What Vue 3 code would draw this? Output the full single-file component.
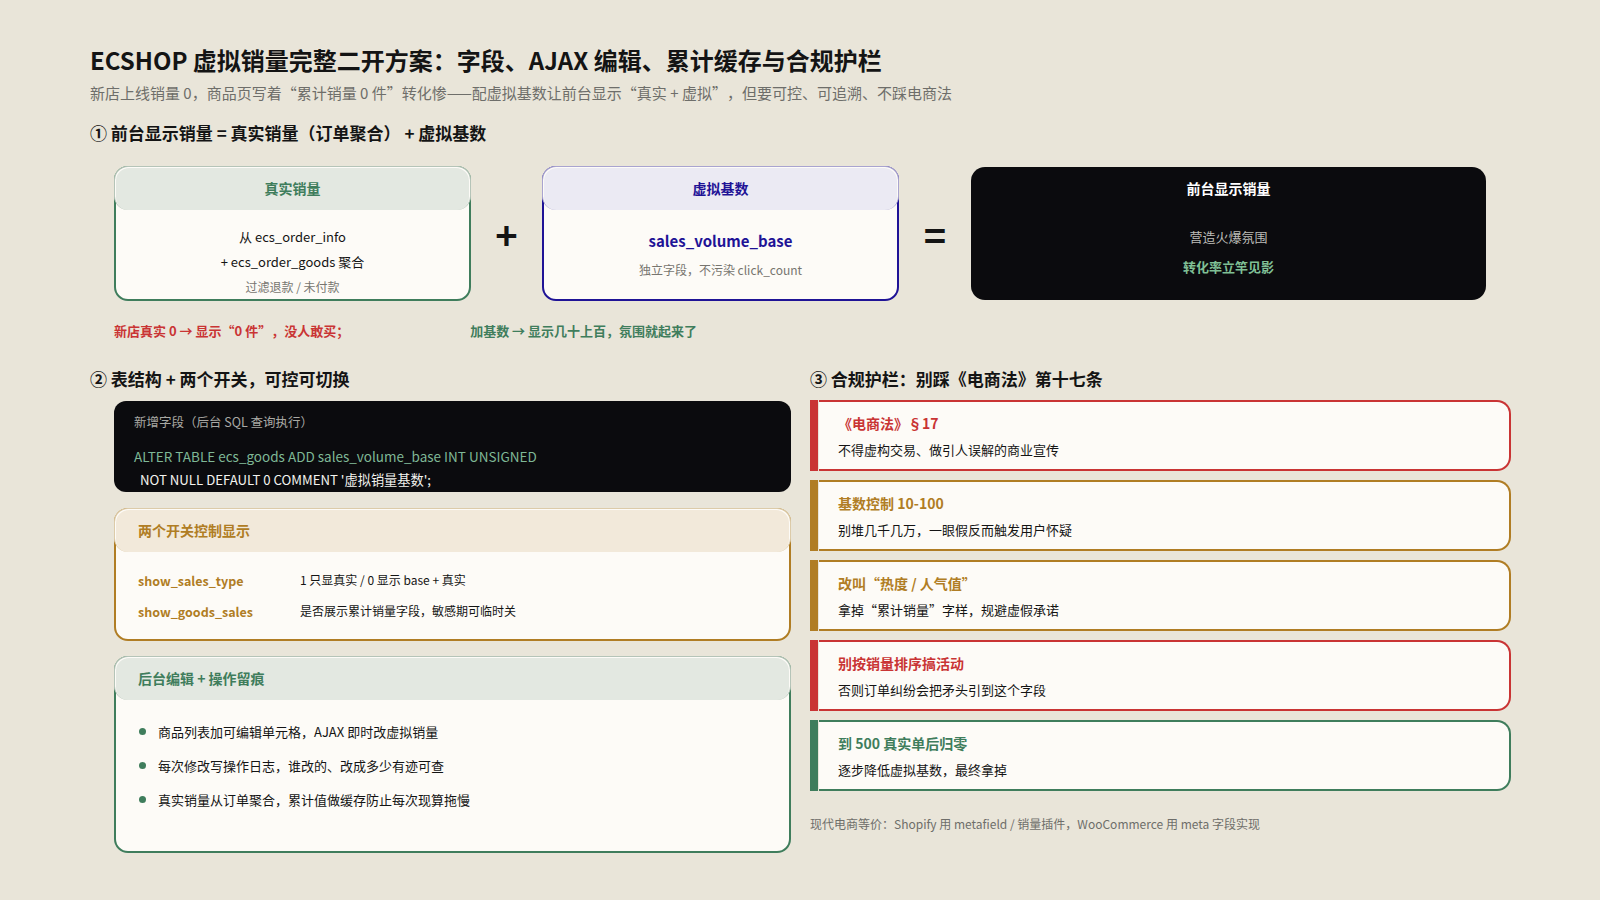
<template>
  <div class="page">
    <h1 class="title">ECSHOP 虚拟销量完整二开方案：字段、AJAX 编辑、累计缓存与合规护栏</h1>
    <p class="subtitle">新店上线销量 0，商品页写着“累计销量 0 件”转化惨——配虚拟基数让前台显示“真实 + 虚拟”，但要可控、可追溯、不踩电商法</p>

    <h2 class="section-head">① 前台显示销量 = 真实销量（订单聚合） + 虚拟基数</h2>
    <div class="formula">
      <div class="card card-green formula-card">
        <div class="card-head center">真实销量</div>
        <div class="card-body real-body">
          <div>从 ecs_order_info</div>
          <div>+ ecs_order_goods 聚合</div>
          <div class="muted">过滤退款 / 未付款</div>
        </div>
      </div>
      <div class="op op-plus">+</div>
      <div class="card card-blue formula-card">
        <div class="card-head center">虚拟基数</div>
        <div class="card-body base-body">
          <div class="field-name">sales_volume_base</div>
          <div class="muted">独立字段，不污染 click_count</div>
        </div>
      </div>
      <div class="op op-equals">=</div>
      <div class="result">
        <div class="result-head">前台显示销量</div>
        <div class="result-sub">营造火爆氛围</div>
        <div class="result-em">转化率立竿见影</div>
      </div>
    </div>
    <div class="notes">
      <span class="note-red">新店真实 0 → 显示“0 件”，没人敢买；</span>
      <span class="note-green">加基数 → 显示几十上百，氛围就起来了</span>
    </div>

    <div class="columns">
      <section>
        <h2 class="section-head tight">② 表结构 + 两个开关，可控可切换</h2>
        <div class="left-stack">
          <div class="code">
            <div class="code-label">新增字段（后台 SQL 查询执行）</div>
            <div class="code-green">ALTER TABLE ecs_goods ADD sales_volume_base INT UNSIGNED</div>
            <div class="code-white">NOT NULL DEFAULT 0 COMMENT '虚拟销量基数';</div>
          </div>

          <div class="card card-amber">
            <div class="card-head">两个开关控制显示</div>
            <div class="card-body switches">
              <div v-for="s in switches" :key="s.key" class="switch-row">
                <span class="switch-key">{{ s.key }}</span>
                <span>{{ s.desc }}</span>
              </div>
            </div>
          </div>

          <div class="card card-green log-card">
            <div class="card-head">后台编辑 + 操作留痕</div>
            <ul class="card-body bullets">
              <li v-for="b in bullets" :key="b">{{ b }}</li>
            </ul>
          </div>
        </div>
      </section>

      <section>
        <h2 class="section-head tight">③ 合规护栏：别踩《电商法》第十七条</h2>
        <div class="rules">
          <div v-for="r in rules" :key="r.title" class="rule" :class="'rule-' + r.tone">
            <div class="rule-bar"></div>
            <div class="rule-box">
              <div class="rule-title">{{ r.title }}</div>
              <div class="rule-text">{{ r.text }}</div>
            </div>
          </div>
        </div>
        <p class="footnote">现代电商等价：Shopify 用 metafield / 销量插件，WooCommerce 用 meta 字段实现</p>
      </section>
    </div>
  </div>
</template>

<script setup>
const switches = [
  { key: 'show_sales_type', desc: '1 只显真实 / 0 显示 base + 真实' },
  { key: 'show_goods_sales', desc: '是否展示累计销量字段，敏感期可临时关' }
]

const bullets = [
  '商品列表加可编辑单元格，AJAX 即时改虚拟销量',
  '每次修改写操作日志，谁改的、改成多少有迹可查',
  '真实销量从订单聚合，累计值做缓存防止每次现算拖慢'
]

const rules = [
  { tone: 'red', title: '《电商法》§17', text: '不得虚构交易、做引人误解的商业宣传' },
  { tone: 'amber', title: '基数控制 10-100', text: '别堆几千几万，一眼假反而触发用户怀疑' },
  { tone: 'amber', title: '改叫“热度 / 人气值”', text: '拿掉“累计销量”字样，规避虚假承诺' },
  { tone: 'red', title: '别按销量排序搞活动', text: '否则订单纠纷会把矛头引到这个字段' },
  { tone: 'green', title: '到 500 真实单后归零', text: '逐步降低虚拟基数，最终拿掉' }
]
</script>

<style>
html, body {
  background: #e9e5d9;
}
</style>

<style scoped>
.page {
  --green: #3f7d5c;
  --blue: #1f1396;
  --amber: #b07d24;
  --red: #c93434;
  --ink: #141414;
  height: 900px;
  box-sizing: border-box;
  padding: 44px 90px 0;
  background: #e9e5d9;
  color: var(--ink);
  font-family: "Noto Sans CJK SC", "Noto Sans", sans-serif;
  text-spacing-trim: space-all;
  overflow: hidden;
}

.title {
  margin: 0;
  font-size: 24px;
  line-height: 32px;
  font-weight: 700;
}

.subtitle {
  margin: 5px 0 0;
  font-size: 15px;
  line-height: 24px;
  color: #6e6e6a;
}

.section-head {
  margin: 15px 0 0;
  font-size: 17px;
  line-height: 26px;
  font-weight: 700;
}

.section-head.tight {
  margin: 0 0 9px;
}

.formula {
  display: flex;
  align-items: flex-start;
  margin: 21px 24px 0;
  height: 134px;
}

.card {
  background: #fdfbf7;
  border: 2px solid var(--tone);
  border-radius: 14px;
  box-sizing: border-box;
}

.card-green { --tone: var(--green); --tone-bg: #e3e8e1; --tone-edge: #b5c4b8; }
.card-blue { --tone: var(--blue); --tone-bg: #ebeaf3; --tone-edge: #a9a4d0; }
.card-amber { --tone: var(--amber); --tone-bg: #f2e9da; --tone-edge: #dccba9; }

.card-head {
  box-sizing: border-box;
  margin: -2px -2px 0;
  height: 44px;
  line-height: 43px;
  padding: 0 23px;
  border: 1px solid var(--tone-edge);
  border-bottom: 0;
  border-radius: 14px;
  background: var(--tone-bg);
  color: var(--tone);
  font-size: 14px;
  font-weight: 700;
  box-shadow: inset 1px 1px 0 #fdfbf7, inset -1px 1px 0 #fdfbf7;
}

.card-head.center {
  text-align: center;
}

.formula-card {
  flex: 0 0 357px;
  height: 135px;
  margin-top: -1px;
}

.card-body {
  font-size: 13px;
}

.real-body {
  padding-top: 14px;
  text-align: center;
  line-height: 25px;
}

.real-body .muted {
  margin-top: 2px;
  line-height: 22px;
}

.muted {
  color: #77756f;
  font-size: 12px;
}

.base-body {
  padding-top: 19px;
  text-align: center;
}

.field-name {
  font-size: 15px;
  line-height: 24px;
  font-weight: 700;
  color: var(--blue);
}

.base-body .muted {
  margin-top: 7px;
  line-height: 20px;
}

.op {
  display: flex;
  align-items: center;
  justify-content: center;
  height: 134px;
  font-size: 38px;
  font-weight: 700;
  line-height: 1;
}

.op-plus {
  flex: 0 0 71px;
}

.op-equals {
  flex: 0 0 72px;
}

.result {
  flex: 0 0 515px;
  height: 133px;
  background: #0b0b0e;
  border-radius: 14px;
  text-align: center;
  color: #fff;
}

.result-head {
  height: 43px;
  line-height: 43px;
  font-size: 14px;
  font-weight: 700;
}

.result-sub {
  margin-top: 17px;
  font-size: 13px;
  line-height: 20px;
  color: #bdbdb8;
}

.result-em {
  margin-top: 10px;
  font-size: 13px;
  line-height: 20px;
  font-weight: 700;
  color: #7fbf95;
}

.notes {
  display: flex;
  gap: 121px;
  margin: 20px 24px 0;
  font-size: 13px;
  line-height: 20px;
  font-weight: 700;
}

.note-red { color: var(--red); }
.note-green { color: var(--green); }

.columns {
  display: grid;
  grid-template-columns: 701px 701px;
  gap: 19px;
  margin-top: 25px;
}

.left-stack {
  display: flex;
  flex-direction: column;
  gap: 16px;
  margin-left: 24px;
}

.code {
  height: 91px;
  box-sizing: border-box;
  padding: 10px 20px 0;
  border-radius: 12px;
  background: #0b0b0e;
  font-size: 13.5px;
  line-height: 24px;
  overflow: hidden;
}

.code-label {
  margin-bottom: 11px;
  font-size: 12.5px;
  line-height: 22px;
  color: #a9a9a4;
}

.code-green { color: #7fb896; }
.code-white { color: #f3f3ef; padding-left: 6px; font-size: 13.2px; }

.log-card {
  margin-top: -1px;
}

.switches {
  height: 87px;
  box-sizing: border-box;
  padding: 12px 22px 0;
  font-size: 12px;
}

.switch-row {
  display: flex;
  height: 31px;
  align-items: center;
}

.switch-key {
  flex: 0 0 162px;
  padding-top: 2px;
  font-size: 12.5px;
  font-weight: 700;
  color: var(--amber);
}

.bullets {
  list-style: none;
  margin: 0;
  padding: 14px 23px 0;
  height: 151px;
  box-sizing: border-box;
}

.bullets li {
  display: flex;
  align-items: center;
  height: 34px;
}

.bullets li::before {
  content: "";
  flex: 0 0 7px;
  height: 7px;
  margin-right: 12px;
  border-radius: 50%;
  background: var(--green);
}

.rules {
  display: flex;
  flex-direction: column;
  gap: 9px;
  margin-top: -1px;
}

.rule {
  display: flex;
  height: 71px;
}

.rule-red { --tone: var(--red); }
.rule-amber { --tone: var(--amber); }
.rule-green { --tone: var(--green); }

.rule-bar {
  flex: 0 0 8px;
  background: var(--tone);
}

.rule-box {
  flex: 1;
  margin-left: 1px;
  box-sizing: border-box;
  padding: 9px 19px 0;
  background: #fdfbf7;
  border: 2px solid var(--tone);
  border-left: none;
  border-radius: 0 14px 14px 0;
}

.rule-title {
  font-size: 14px;
  line-height: 24px;
  font-weight: 700;
  color: var(--tone);
}

.rule-text {
  margin-top: 5px;
  font-size: 13px;
  line-height: 20px;
}

.footnote {
  margin: 23px 0 0;
  font-size: 12px;
  line-height: 20px;
  color: #6e6e6a;
}
</style>
